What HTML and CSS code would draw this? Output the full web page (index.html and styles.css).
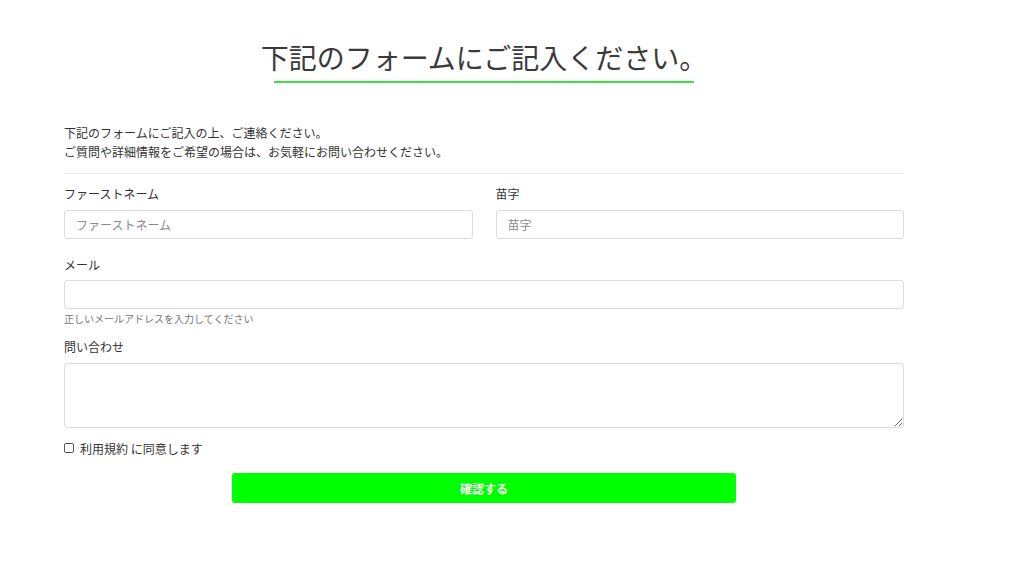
FILE: index.html
```html
<!DOCTYPE html>
<html lang="ja">
<head>
    <meta charset="UTF-8">
    <meta name="viewport" content="width=device-width, initial-scale=1.0">
    <title>お問い合わせ</title>

    <link rel="stylesheet" href="styles.css">
</head>
<body>
    <div class="container">
        <div class="title">
            <h1>下記のフォームにご記入ください。</h1>
        </div>
        <p class="intro">下記のフォームにご記入の上、ご連絡ください。<br>ご質問や詳細情報をご希望の場合は、お気軽にお問い合わせください。</p>
        <hr>
        <form>
            <div class="row">
                <div class="field">
                    <label for="first">ファーストネーム</label>
                    <input type="text" id="first" placeholder="ファーストネーム">
                </div>
                <div class="field">
                    <label for="last">苗字</label>
                    <input type="text" id="last" placeholder="苗字">
                </div>
            </div>
            <div class="field mail">
                <label for="mail">メール</label>
                <input type="email" id="mail">
                <p class="help">正しいメールアドレスを入力してください</p>
            </div>
            <div class="field message">
                <label for="message">問い合わせ</label>
                <textarea id="message"></textarea>
            </div>
            <div class="agree">
                <input type="checkbox" id="terms">
                <label for="terms"><a href="">利用規約</a> に同意します</label>
            </div>
            <button type="button" class="submit">確認する</button>
        </form>
    </div>
</body>
</html>
```

FILE: styles.css
```css
html body{
    margin: 0;
    background-color: white;
    color: #333;
    font-family: "Noto Sans CJK JP", "Noto Sans", sans-serif;
    font-size: 12px;
}

.container{
    width: 840px;
    margin-left: 64px;
}

.title{
    text-align: center;
    padding-top: 39px;
}

.title h1{
    margin: 0;
    font-size: 28px;
    font-weight: 400;
    line-height: 36px;
    color: #3a3a3a;
}

.title::after{
    content: "";
    display: block;
    width: 420px;
    height: 2px;
    margin: 6px auto 0;
    background-color: #3ee03e;
}

.intro{
    margin: 40px 0 0;
    line-height: 19px;
}

hr{
    margin: 12px 0 0;
    border: none;
    border-top: 1px solid #e8e8e8;
}

form{
    padding-top: 11px;
}

.row{
    display: flex;
    gap: 23px;
}

.row .field{
    flex: 1;
    margin-bottom: 17px;
}

.field{
    margin-bottom: 18px;
}

.field label{
    display: block;
    line-height: 18px;
    margin-bottom: 6px;
}

.row .field label,
.message label{
    margin-bottom: 7px;
}

input[type="text"], input[type="email"], textarea{
    box-sizing: border-box;
    width: 100%;
    height: 29px;
    padding: 0 11px;
    border: 1px solid #dcdcdc;
    border-radius: 3px;
    font-family: inherit;
    font-size: 12px;
    color: #333;
    outline: none;
}

input::placeholder{
    color: #8a8a8a;
}

textarea{
    height: 65px;
    padding: 6px 11px;
    resize: vertical;
    display: block;
}

.help{
    margin: 3px 0 0;
    font-size: 10px;
    line-height: 14px;
    color: #777;
}

.mail{
    margin-bottom: 12px;
}

.message{
    margin-bottom: 11px;
}

.agree{
    display: flex;
    align-items: center;
    gap: 6px;
    height: 18px;
}

.agree input{
    appearance: none;
    margin: 0;
    width: 10px;
    height: 10px;
    border: 1px solid #555;
    border-radius: 2px;
    background: white;
}

.agree a{
    color: #333;
    text-decoration: none;
}

.submit{
    display: block;
    width: 504px;
    height: 30px;
    margin: 16px auto 0;
    border: none;
    border-radius: 3px;
    background-color: #00ff00;
    color: white;
    font-family: inherit;
    font-size: 12px;
    font-weight: 700;
}
```
